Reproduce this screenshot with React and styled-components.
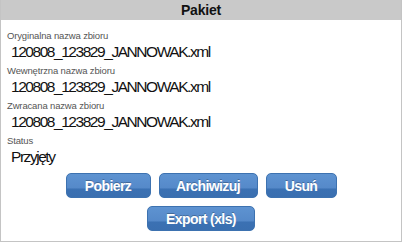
import React from 'react'
import styled, { createGlobalStyle } from 'styled-components';

const GlobalStyle = createGlobalStyle`
  body {
    margin: 0;
    background: #ffffff;
    font-family: "Liberation Sans", Arial, sans-serif;
  }
`;

const Panel = styled.div`
  width: 402px;
  height: 242px;
  box-sizing: border-box;
  border: 1px solid #c4c4c4;
  border-top: none;
  background: #fff;
  display: flex;
  flex-direction: column;
`;

const Header = styled.div`
  height: 20px;
  background: #c9c9c9;
  display: flex;
  align-items: center;
  justify-content: center;
  font-size: 14px;
  font-weight: bold;
  color: #111;
  letter-spacing: -0.2px;
`;

const Body = styled.div`
  padding: 10px 0 0 6px;
  display: flex;
  flex-direction: column;
`;

const Field = styled.div`
  display: flex;
  flex-direction: column;
  margin-bottom: 3px;
`;

const Label = styled.div`
  font-size: 9.5px;
  line-height: 12px;
  color: #555;
  letter-spacing: -0.15px;
`;

const Value = styled.div`
  font-size: 15.5px;
  line-height: 20px;
  color: #111;
  padding-left: 4px;
  letter-spacing: -1.45px;
`;

const Actions = styled.div`
  display: flex;
  flex-direction: column;
  align-items: center;
  gap: 8px;
  margin-top: 3px;
`;

const Row = styled.div`
  display: flex;
  justify-content: center;
  gap: 8px;
`;

const Button = styled.button`
  width: ${p => p.w}px;
  height: 25px;
  border: 1px solid #3d72b0;
  border-radius: 5px;
  background: linear-gradient(to bottom, #5e93d1 0%, #5589c9 62%, #3b71b3 64%, #3a6fb0 100%);
  color: #fff;
  font-family: "Liberation Sans", Arial, sans-serif;
  font-size: 14px;
  font-weight: bold;
  letter-spacing: -0.6px;
  text-shadow: 0 -1px 0 rgba(0, 0, 0, 0.25);
  padding: 0;
  cursor: pointer;
`;

const fields = [
  { label: 'Oryginalna nazwa zbioru', value: '120808_123829_JANNOWAK.xml' },
  { label: 'Wewnętrzna nazwa zbioru', value: '120808_123829_JANNOWAK.xml' },
  { label: 'Zwracana nazwa zbioru', value: '120808_123829_JANNOWAK.xml' },
  { label: 'Status', value: 'Przyjęty' },
];

const App = () => {
  return (
    <>
      <GlobalStyle />
      <Panel>
        <Header>Pakiet</Header>
        <Body>
          {fields.map(f => (
            <Field key={f.label}>
              <Label>{f.label}</Label>
              <Value>{f.value}</Value>
            </Field>
          ))}
        </Body>
        <Actions>
          <Row>
            <Button w={85}>Pobierz</Button>
            <Button w={99}>Archiwizuj</Button>
            <Button w={71}>Usuń</Button>
          </Row>
          <Row>
            <Button w={108}>Export (xls)</Button>
          </Row>
        </Actions>
      </Panel>
    </>
  )
};

export default App
